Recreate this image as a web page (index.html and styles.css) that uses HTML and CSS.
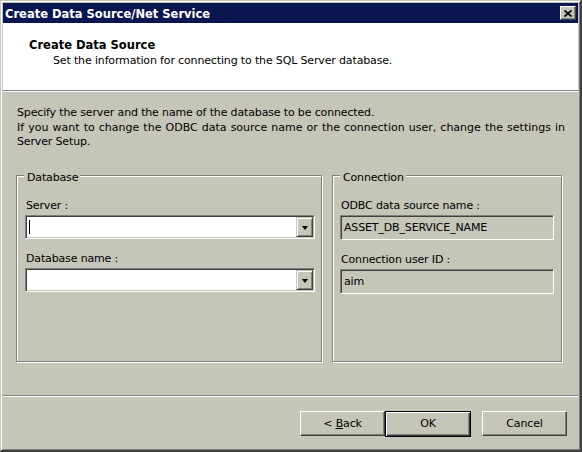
FILE: index.html
```html
<!DOCTYPE html>
<html>
<head>
<meta charset="utf-8">
<title>Create Data Source/Net Service</title>
<link rel="stylesheet" href="styles.css">
</head>
<body>
<div class="window">
  <div class="titlebar">
    <span class="title">Create Data Source/Net Service</span>
    <span class="close-btn">
      <svg width="8" height="7" viewBox="0 0 8 7"><path d="M0.5 0.5 L7.5 6.5 M7.5 0.5 L0.5 6.5" stroke="#000" stroke-width="1.7" fill="none"/></svg>
    </span>
  </div>
  <div class="header">
    <div class="h-title">Create Data Source</div>
    <div class="h-sub">Set the information for connecting to the SQL Server database.</div>
  </div>
  <div class="sep"></div>
  <div class="body">
    <p class="intro"><span class="line">Specify the server and the name of the database to be connected.</span><span class="line line-wide">If you want to change the ODBC data source name or the connection user, change the settings in</span><span class="line">Server Setup.</span></p>
    <div class="groups">
      <div class="group group-db">
        <span class="legend">Database</span>
        <div class="label">Server :</div>
        <div class="field combo"><span class="caret"></span><span class="drop"><span class="tri"></span></span></div>
        <div class="label label-2">Database name :</div>
        <div class="field combo combo-2"><span class="drop"><span class="tri"></span></span></div>
      </div>
      <div class="group group-conn">
        <span class="legend">Connection</span>
        <div class="label">ODBC data source name :</div>
        <div class="field readonly">ASSET_DB_SERVICE_NAME</div>
        <div class="label label-2">Connection user ID :</div>
        <div class="field readonly readonly-2">aim</div>
      </div>
    </div>
  </div>
  <div class="footer">
    <div class="sep"></div>
    <div class="buttons">
      <div class="btn"><span>&lt; <u>B</u>ack</span></div>
      <div class="btn btn-default"><span>OK</span></div>
      <div class="btn btn-cancel"><span>Cancel</span></div>
    </div>
  </div>
</div>
</body>
</html>
```

FILE: styles.css
```css
* { box-sizing: border-box; }
html, body { margin: 0; padding: 0; }
body {
  width: 582px;
  height: 452px;
  overflow: hidden;
  background: #c5c5b9;
  font-family: "DejaVu Sans", "Liberation Sans", sans-serif;
  font-size: 11px;
  letter-spacing: -0.15px;
  color: #000;
}
.window {
  width: 582px;
  height: 452px;
  display: flex;
  flex-direction: column;
  background: #c5c5b9;
  border-style: solid;
  border-width: 1px 2px 2px 1px;
  border-color: #c5c5b9 #404040 #404040 #c5c5b9;
  box-shadow: inset 1px 1px 0 #fff, inset -1px -1px 0 #808080;
  padding: 2px 2px 2px 2px;
}
.titlebar {
  height: 20px;
  flex: none;
  background: #0b1550;
  display: flex;
  align-items: center;
  padding: 0 2px 0 2px;
}
.title {
  color: #fff;
  font-weight: bold;
  font-size: 11.5px;
  letter-spacing: 0;
  line-height: 14px;
  margin-top: 1px;
}
.close-btn {
  margin-left: auto;
  width: 16px;
  height: 14px;
  background: #c5c5b9;
  border: 1px solid;
  border-color: #fff #404040 #404040 #fff;
  box-shadow: inset -1px -1px 0 #808080;
  display: flex;
  align-items: center;
  justify-content: center;
}
.close-btn svg { display: block; margin-left: -1px; }
.header {
  height: 67px;
  flex: none;
  background: #fff;
  padding: 15px 0 0 26px;
}
.h-title {
  font-weight: bold;
  font-size: 11.5px;
  letter-spacing: 0;
  line-height: 14px;
}
.h-sub {
  line-height: 14px;
  margin-top: 2px;
  padding-left: 24px;
}
.sep {
  height: 2px;
  flex: none;
  border-top: 1px solid #808080;
  border-bottom: 1px solid #fff;
}
.body {
  flex: 1;
  padding: 14px 0 0 13px;
}
.intro {
  margin: 0 0 0 1px;
  line-height: 14.5px;
}
.line { display: block; white-space: nowrap; }
.line-wide { letter-spacing: 0; word-spacing: 0.6px; }
.groups {
  display: flex;
  gap: 10px;
  margin-top: 25.5px;
}
.group {
  position: relative;
  height: 187px;
  border: 1px solid #808080;
  box-shadow: inset 1px 1px 0 #fff, 1px 1px 0 #fff;
  padding: 23px 6px 0 8px;
}
.group-db { width: 306px; }
.group-conn { width: 230px; padding: 23px 7px 0 7px; }
.legend {
  position: absolute;
  top: -5px;
  left: 7px;
  padding: 0 2px 0 3px;
  background: #c5c5b9;
  line-height: 14px;
}
.label {
  line-height: 14px;
  padding-left: 1px;
}
.label-2 { margin-top: 13px; }
.field {
  position: relative;
  height: 24px;
  margin-top: 2px;
  border: 1px solid;
  border-color: #808080 #fff #fff #808080;
  box-shadow: inset 1px 1px 0 #404040, inset -1px -1px 0 #c5c5b9;
}
.combo {
  background: #fff;
  display: flex;
  justify-content: flex-end;
  padding: 1px;
}
.caret {
  position: absolute;
  left: 3px;
  top: 4px;
  width: 1px;
  height: 14px;
  background: #000;
}
.drop {
  width: 17px;
  height: 20px;
  background: #c5c5b9;
  border: 1px solid;
  border-color: #c5c5b9 #404040 #404040 #c5c5b9;
  box-shadow: inset 1px 1px 0 #fff, inset -1px -1px 0 #808080;
  display: flex;
  align-items: center;
  justify-content: center;
}
.tri {
  width: 0;
  height: 0;
  border-left: 3.5px solid transparent;
  border-right: 3.5px solid transparent;
  border-top: 4px solid #000;
  margin-top: 1px;
}
.readonly {
  background: #c5c5b9;
  height: 25px;
  line-height: 21px;
  padding: 1px 0 0 3px;
}
.footer {
  flex: none;
  height: 53px;
}
.buttons {
  display: flex;
  justify-content: flex-end;
  align-items: flex-start;
  padding: 14px 11px 0 0;
}
.btn {
  width: 85px;
  height: 25px;
  border: 1px solid;
  border-color: #fff #404040 #404040 #fff;
  box-shadow: inset -1px -1px 0 #808080;
  display: flex;
  align-items: center;
  justify-content: center;
  line-height: 14px;
}
.btn-default {
  width: 86px;
  height: 26px;
  border: 1px solid #000;
  box-shadow: inset 1px 1px 0 #fff, inset -1px -1px 0 #404040, inset -2px -2px 0 #808080;
}
.btn-cancel { margin-left: 11px; }
```
